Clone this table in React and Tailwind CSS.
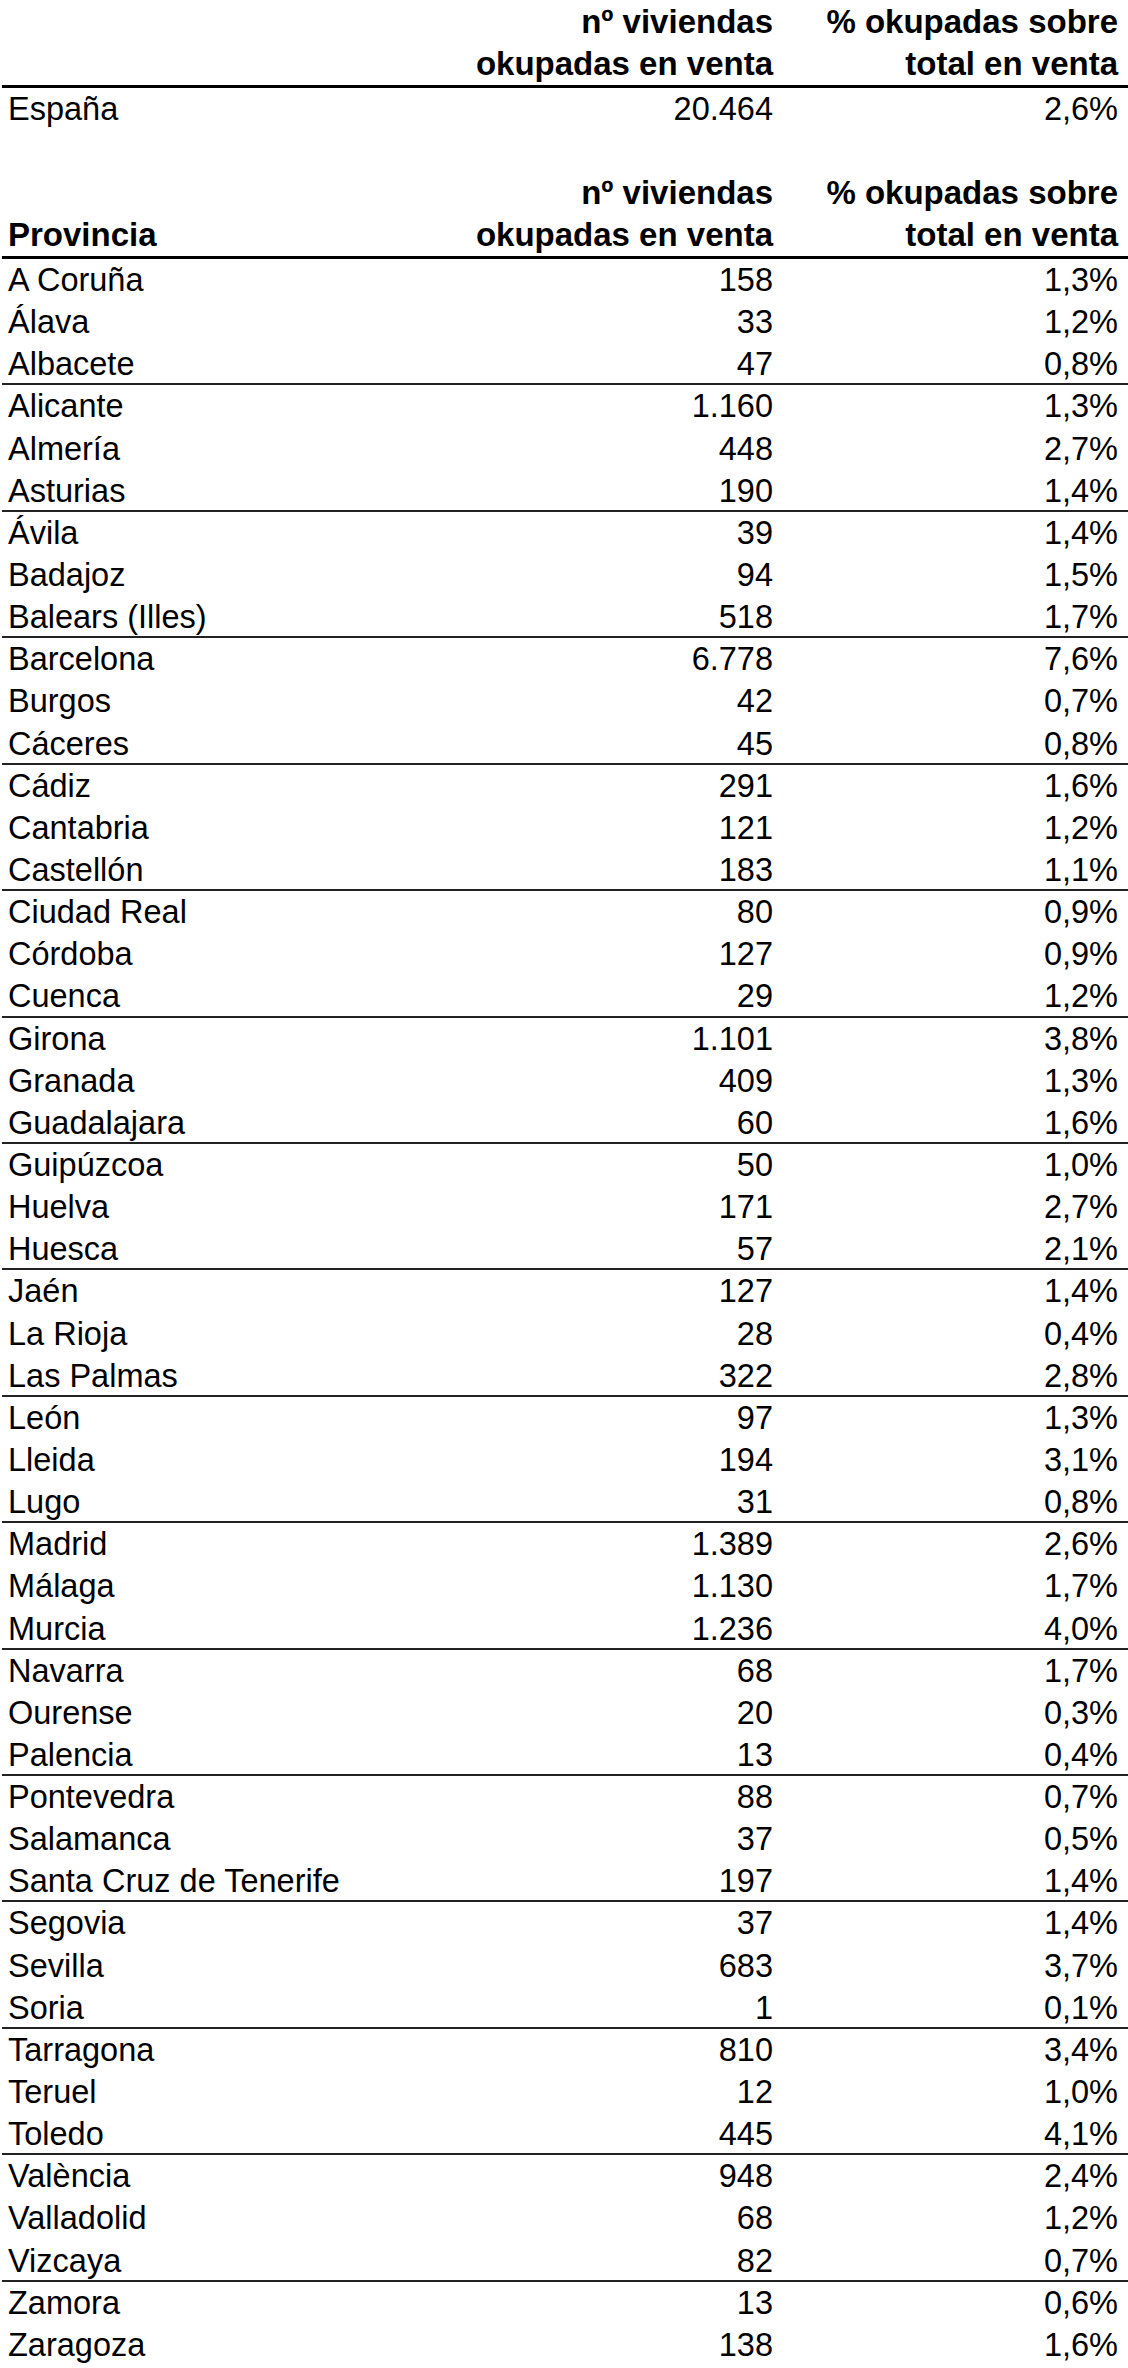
import React from "react";

const rows = [
  ["A Coruña", "158", "1,3%"],
  ["Álava", "33", "1,2%"],
  ["Albacete", "47", "0,8%"],
  ["Alicante", "1.160", "1,3%"],
  ["Almería", "448", "2,7%"],
  ["Asturias", "190", "1,4%"],
  ["Ávila", "39", "1,4%"],
  ["Badajoz", "94", "1,5%"],
  ["Balears (Illes)", "518", "1,7%"],
  ["Barcelona", "6.778", "7,6%"],
  ["Burgos", "42", "0,7%"],
  ["Cáceres", "45", "0,8%"],
  ["Cádiz", "291", "1,6%"],
  ["Cantabria", "121", "1,2%"],
  ["Castellón", "183", "1,1%"],
  ["Ciudad Real", "80", "0,9%"],
  ["Córdoba", "127", "0,9%"],
  ["Cuenca", "29", "1,2%"],
  ["Girona", "1.101", "3,8%"],
  ["Granada", "409", "1,3%"],
  ["Guadalajara", "60", "1,6%"],
  ["Guipúzcoa", "50", "1,0%"],
  ["Huelva", "171", "2,7%"],
  ["Huesca", "57", "2,1%"],
  ["Jaén", "127", "1,4%"],
  ["La Rioja", "28", "0,4%"],
  ["Las Palmas", "322", "2,8%"],
  ["León", "97", "1,3%"],
  ["Lleida", "194", "3,1%"],
  ["Lugo", "31", "0,8%"],
  ["Madrid", "1.389", "2,6%"],
  ["Málaga", "1.130", "1,7%"],
  ["Murcia", "1.236", "4,0%"],
  ["Navarra", "68", "1,7%"],
  ["Ourense", "20", "0,3%"],
  ["Palencia", "13", "0,4%"],
  ["Pontevedra", "88", "0,7%"],
  ["Salamanca", "37", "0,5%"],
  ["Santa Cruz de Tenerife", "197", "1,4%"],
  ["Segovia", "37", "1,4%"],
  ["Sevilla", "683", "3,7%"],
  ["Soria", "1", "0,1%"],
  ["Tarragona", "810", "3,4%"],
  ["Teruel", "12", "1,0%"],
  ["Toledo", "445", "4,1%"],
  ["València", "948", "2,4%"],
  ["Valladolid", "68", "1,2%"],
  ["Vizcaya", "82", "0,7%"],
  ["Zamora", "13", "0,6%"],
  ["Zaragoza", "138", "1,6%"],
];

function HeaderBlock({ label }) {
  return (
    <div className="font-bold text-[33px] leading-[42px]">
      <div className="flex h-[42px]">
        <div className="flex-1 pl-[6px]"></div>
        <div className="w-[373px] text-right whitespace-nowrap">nº viviendas</div>
        <div className="w-[355px] pr-[10px] text-right whitespace-nowrap">% okupadas sobre</div>
      </div>
      <div className="flex h-[42px]">
        <div className="flex-1 pl-[6px] whitespace-nowrap">{label}</div>
        <div className="w-[373px] text-right whitespace-nowrap">okupadas en venta</div>
        <div className="w-[355px] pr-[10px] text-right whitespace-nowrap">total en venta</div>
      </div>
      <div className="h-[3px] bg-black"></div>
    </div>
  );
}

export default function App() {
  return (
    <div
      className="w-[1128px] h-[2368px] bg-white text-black overflow-hidden pt-[1px] pl-[2px]"
      style={{ fontFamily: '"Liberation Sans", Arial, sans-serif' }}
    >
      <HeaderBlock label="" />
      <div className="flex h-[42px] text-[32.5px] leading-[42px]">
        <div className="flex-1 pl-[6px]">España</div>
        <div className="w-[373px] text-right">20.464</div>
        <div className="w-[355px] pr-[10px] text-right">2,6%</div>
      </div>
      <div className="h-[42px]"></div>
      <HeaderBlock label="Provincia" />
      <div className="text-[32.5px] leading-[42px]">
        {rows.map((r, i) => {
          const line = i % 3 === 2 && i !== rows.length - 1;
          return (
            <div
              key={r[0]}
              className={
                line
                  ? "flex h-[42.15px] border-b-2 border-[#222222]"
                  : "flex h-[42.15px]"
              }
            >
              <div className="flex-1 pl-[6px] whitespace-nowrap">{r[0]}</div>
              <div className="w-[373px] text-right">{r[1]}</div>
              <div className="w-[355px] pr-[10px] text-right">{r[2]}</div>
            </div>
          );
        })}
      </div>
    </div>
  );
}
